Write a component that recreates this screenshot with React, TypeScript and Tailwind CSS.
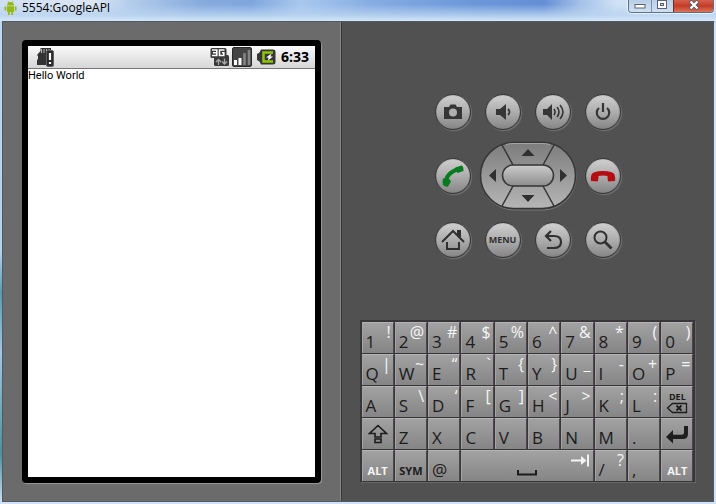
import clsx from "clsx";
import type { ReactNode } from "react";

type KeyDef = { main: string; alt?: string };

const keyRows: KeyDef[][] = [
  [
    { main: "1", alt: "!" },
    { main: "2", alt: "@" },
    { main: "3", alt: "#" },
    { main: "4", alt: "$" },
    { main: "5", alt: "%" },
    { main: "6", alt: "^" },
    { main: "7", alt: "&" },
    { main: "8", alt: "*" },
    { main: "9", alt: "(" },
    { main: "0", alt: ")" },
  ],
  [
    { main: "Q", alt: "|" },
    { main: "W", alt: "~" },
    { main: "E", alt: "“" },
    { main: "R", alt: "`" },
    { main: "T", alt: "{" },
    { main: "Y", alt: "}" },
    { main: "U", alt: "_" },
    { main: "I", alt: "-" },
    { main: "O", alt: "+" },
    { main: "P", alt: "=" },
  ],
  [
    { main: "A" },
    { main: "S", alt: "\\" },
    { main: "D", alt: "‘" },
    { main: "F", alt: "[" },
    { main: "G", alt: "]" },
    { main: "H", alt: "<" },
    { main: "J", alt: ">" },
    { main: "K", alt: ";" },
    { main: "L", alt: ":" },
  ],
  [{ main: "Z" }, { main: "X" }, { main: "C" }, { main: "V" }, { main: "B" }, { main: "N" }, { main: "M" }, { main: "." }],
];

const keyFace =
  "h-full w-full bg-linear-to-b from-[#a2a2a2] to-[#858585] border-t border-l border-t-[#b4b4b4] border-l-[#a4a4a4] border-r border-r-[#4a484a] overflow-hidden";

function Key({ main, alt }: KeyDef) {
  return (
    <button className={clsx(keyFace, "flex justify-between pl-[3px] pr-[2px]")}>
      <span className="self-end text-[17px] leading-[23px] text-[#1c1c1c]">{main}</span>
      {alt && <span className="text-[16px] leading-[18px] text-[#f6f6f6]">{alt}</span>}
    </button>
  );
}

function IconKey({ label, wide, children }: { label: string; wide?: boolean; children: ReactNode }) {
  return (
    <button
      aria-label={label}
      className={clsx(keyFace, "flex flex-col items-center justify-center", wide && "col-span-4")}
    >
      {children}
    </button>
  );
}

function WordKey({ word, light }: { word: string; light?: boolean }) {
  return (
    <button
      className={clsx(
        keyFace,
        "flex items-end justify-center pb-[2px] text-[11px] leading-4 font-bold",
        light ? "text-[#f4f4f4]" : "text-[#1c1c1c]"
      )}
    >
      {word}
    </button>
  );
}

function Keyboard() {
  return (
    <div className="mt-[62px] grid h-[163px] w-[336px] grid-cols-10 grid-rows-5 gap-px border border-[#393639] border-r-[#656565] border-b-[#656565] bg-[#393639] p-px">
      {keyRows[0].map((k) => (
        <Key key={k.main} {...k} />
      ))}
      {keyRows[1].map((k) => (
        <Key key={k.main} {...k} />
      ))}
      {keyRows[2].map((k) => (
        <Key key={k.main} {...k} />
      ))}
      <IconKey label="Delete">
        <span className="text-[9px] leading-[11px] font-bold text-[#1c1c1c]">DEL</span>
        <svg width="22" height="12" viewBox="0 0 22 12" fill="none" stroke="#1c1c1c">
          <path d="M6.5 1.5h14v9h-14L1.5 6z" strokeWidth="1.3" />
          <path d="M10.500 3.500l5 5M15.500 3.500l-5 5" strokeWidth="1.8" />
        </svg>
      </IconKey>
      <IconKey label="Shift">
        <svg width="20" height="20" viewBox="0 0 20 20" fill="none" stroke="#1c1c1c" strokeWidth="1.6">
          <path d="M10 1.5L1.5 9.500H7v3.500h6V9.500h5.500z" />
          <path d="M7 15h6v3.500H7z" />
        </svg>
      </IconKey>
      {keyRows[3].map((k) => (
        <Key key={k.main} {...k} />
      ))}
      <IconKey label="Enter">
        <svg width="24" height="20" viewBox="0 0 24 20">
          <path d="M1 13l7-7v4.800h8.500q2.500 0 2.500-2.500V2h4v8q0 5-5 5H8v4.500z" fill="#1f1f1f" />
        </svg>
      </IconKey>
      <WordKey word="ALT" light />
      <WordKey word="SYM" />
      <Key main="@" />
      <IconKey label="Space" wide>
        <svg width="130" height="30" viewBox="0 0 130 30" fill="none">
          <path d="M56 19v4.500h18V19" stroke="#1c1c1c" strokeWidth="2" />
          <path d="M109 9.500h13M126 3.500v12" stroke="#f4f4f4" strokeWidth="2" />
          <path d="M119 5l5.500 4.500-5.500 4.500z" fill="#f4f4f4" />
        </svg>
      </IconKey>
      <Key main="/" alt="?" />
      <Key main="," />
      <WordKey word="ALT" light />
    </div>
  );
}

function RoundButton({ label, children }: { label: string; children: ReactNode }) {
  return (
    <button
      aria-label={label}
      className="flex size-9 items-center justify-center rounded-full border border-[#383838] bg-linear-to-b from-[#d0d0d0] via-[#adadad] to-[#868686] text-[9px] font-bold text-[#303030] shadow-[1px_1px_1px_#747474,inset_0_0_1px_#404040]"
    >
      {children}
    </button>
  );
}

function DPad() {
  return (
    <button aria-label="Directional pad">
      <svg width="98" height="70" viewBox="0 0 98 70">
        <defs>
          <linearGradient id="pad" x1="0" y1="0" x2="0" y2="1">
            <stop offset="0" stopColor="#7c7c7c" />
            <stop offset="1" stopColor="#b6b6b6" />
          </linearGradient>
          <linearGradient id="ok" x1="0" y1="0" x2="0" y2="1">
            <stop offset="0" stopColor="#cccccc" />
            <stop offset="1" stopColor="#8c8c8c" />
          </linearGradient>
        </defs>
        <rect x="2" y="2" width="95" height="67" rx="33" fill="none" stroke="#777777" />
        <rect x="1.500" y="1.500" width="95" height="66" rx="33" fill="url(#pad)" stroke="#353535" strokeWidth="1.500" />
        <path d="M27 3.500q4-1 8-1h28q4 0 8 1" stroke="#a6a6a6" fill="none" />
        <path d="M23 4l11 20M75 4L64 24M34 45L23 65M64 45l11 20" stroke="#353535" strokeWidth="1.500" />
        <rect x="23.500" y="24" width="51" height="21" rx="10.500" fill="url(#ok)" stroke="#353535" strokeWidth="1.500" />
        <path d="M49 8l6.500 7h-13zM49 61l6.500-7h-13zM10 34.500l7-6.500v13zM88 34.500L81 28v13z" fill="#303030" />
      </svg>
    </button>
  );
}

function Controls() {
  return (
    <div className="flex w-[186px] flex-col gap-3">
      <div className="flex justify-between">
        <RoundButton label="Camera">
          <svg width="20" height="16" viewBox="0 0 20 16" fill="#363636">
            <path d="M1 3h5l1.500-2.500h5L14 3h5v12H1z" />
            <circle cx="10" cy="8.500" r="4" fill="#b0b0b0" />
          </svg>
        </RoundButton>
        <RoundButton label="Volume down">
          <svg width="18" height="18" viewBox="0 0 18 18" fill="#363636">
            <path d="M2 6h4l6-5v16l-6-5H2z" />
            <path d="M14 6q3 3 0 6" fill="none" stroke="#363636" strokeWidth="1.800" />
          </svg>
        </RoundButton>
        <RoundButton label="Volume up">
          <svg width="22" height="18" viewBox="0 0 22 18" fill="#363636">
            <path d="M1 6h4l5-5v16l-5-5H1z" />
            <path d="M12 6q2 3 0 6M15 4q4 5 0 10M18 2q6 7 0 14" fill="none" stroke="#363636" strokeWidth="1.600" />
          </svg>
        </RoundButton>
        <RoundButton label="Power">
          <svg width="18" height="18" viewBox="0 0 18 18" fill="none" stroke="#363636" strokeWidth="2.200">
            <path d="M5 5a6.200 6.200 0 1 0 8 0M9 0v9" />
          </svg>
        </RoundButton>
      </div>
      <div className="flex h-[68px] items-center justify-between">
        <RoundButton label="Call">
          <svg width="24" height="24" viewBox="0 0 24 24">
            <path d="M5 20Q4 9 19 4.500" fill="none" stroke="#087a20" strokeWidth="4" />
            <path d="M14.500 3.500l6-2q2 0 2 5.500l-6 2q-1.500-1-2-5.500zM2 14.500l4.500-.5q3 1.500 3.500 3.500l-3 5q-2 1-5-1.500-1-2 0-6.500z" fill="#087a20" />
          </svg>
        </RoundButton>
        <DPad />
        <RoundButton label="End call">
          <svg width="26" height="12" viewBox="0 0 26 12" fill="#b50d14">
            <path d="M1.500 4.500Q3 1 13 1t11.500 3.500q1 3 .5 6.500l-6.500.500q-1-1-1-5.500-4.500-1-9 0 0 4.500-1 5.500L1 11Q.5 7.500 1.500 4.500z" />
          </svg>
        </RoundButton>
      </div>
      <div className="flex justify-between">
        <RoundButton label="Home">
          <svg width="24" height="22" viewBox="0 0 24 22" fill="none" stroke="#303030" strokeWidth="2">
            <path d="M1 13L12 2l11 11M17 6V2h2v6M6 13v7h12v-7" />
          </svg>
        </RoundButton>
        <RoundButton label="Menu">MENU</RoundButton>
        <RoundButton label="Back">
          <svg width="20" height="20" viewBox="0 0 20 20" fill="none" stroke="#303030" strokeWidth="2.200">
            <path d="M8 1L3 6l5 5M3 6h8q7 0 7 6t-7 6H4" />
          </svg>
        </RoundButton>
        <RoundButton label="Search">
          <svg width="20" height="20" viewBox="0 0 20 20" fill="none" stroke="#303030">
            <circle cx="7.500" cy="7.500" r="6" strokeWidth="2" />
            <path d="M12 12l6.500 6.500" strokeWidth="2.800" />
          </svg>
        </RoundButton>
      </div>
    </div>
  );
}

function StatusBar() {
  return (
    <div className="flex h-[23px] items-center border-b border-[#777777] bg-linear-to-b from-[#fafafa] to-[#d6d6d6] pr-[6px] pl-2">
      {/* SD card warning */}
      <svg width="18" height="20" viewBox="0 0 18 20">
        <path d="M4.500 1H15v17H1v-5l1-1V9L1 8l3.500-4z" fill="#333333" />
        <path d="M5.500 2v4M8 2v4M10.500 2v4M13 2v4" stroke="#b8b8b8" />
        <rect x="10.500" y="3.500" width="7" height="16" rx="1.500" fill="#292929" stroke="#606060" />
        <path d="M14 6v7M14 15v2" stroke="#ffffff" strokeWidth="2.200" />
      </svg>
      <div className="ml-auto flex items-center gap-[2px]">
        {/* 3G data */}
        <svg width="20" height="20" viewBox="0 0 20 20">
          <rect x=".5" y="1" width="16" height="10" rx="1.500" fill="#393939" />
          <rect x="4" y="8" width="15" height="11" rx="1.500" fill="#393939" />
          <path d="M2 3h4.800v5.500H2M3 5.800h3.500M14.500 3H9.500v5.500h4.300V5.800H12" fill="none" stroke="#ffffff" strokeWidth="1.600" />
          <path d="M8.500 18v-5M6 15l2.500-2.500L11 15M14.500 11.500v5M12 14.500l2.500 2.500 2.500-2.500" fill="none" stroke="#a8a8a8" strokeWidth="1.300" />
        </svg>
        <svg width="20" height="20" viewBox="0 0 20 20">
          <rect x=".5" y=".5" width="19" height="19" rx="1.500" fill="#444444" stroke="#292929" />
          <path d="M3.500 13v5M8 11v7" stroke="#ffffff" strokeWidth="3" />
          <path d="M12.500 6v12M17 3v15" stroke="#858585" strokeWidth="2.500" />
        </svg>
        {/* Charging battery */}
        <svg className="ml-[2px]" width="20" height="16" viewBox="0 0 20 16">
          <path d="M5 .5h12q2.500 0 2.500 2v11q0 2-2.500 2H5l-1.500-3L1 11V5l2.500-1.500z" fill="#363636" />
          <path d="M17 3.500H7.500v9H17" fill="none" stroke="#8fc700" strokeWidth="2.500" />
          <path d="M15.500 4.500L10 8.500h2.500l-.5 3 5-4h-2.500z" fill="#ffffff" />
        </svg>
      </div>
      <span className="ml-[5px] text-[14px] leading-5 font-bold text-black">6:33</span>
    </div>
  );
}

function TitleBar() {
  return (
    <header className="flex h-[21px] items-start overflow-hidden bg-[linear-gradient(to_bottom,transparent_20%,#b9d3f0cc_70%,#d5e6f8),linear-gradient(to_right,#cfdff2_0%,#dce6f3_13%,#b4cdeb_18%,#86abdd_28%,#7fa6dd_35%,#a8c8ee_42%,#86ace2_52%,#6b97d9_66%,#658fd5_76%,#a3c0e8_81%,#cfe1f5_86%,#dceafa_100%)] pr-[2px] pl-1">
      <svg className="mt-[1px]" width="13" height="14" viewBox="0 0 13 14" fill="#94b816">
        <path d="M3 4.500a3.500 3.500 0 0 1 7 0zM3 5.200h7V11H3zM.5 5.500h1.700v4H.5zM10.800 5.500h1.700v4h-1.700zM4 11h1.700v3H4zM7.300 11H9v3H7.300z" />
        <path d="M4 0l1 2M9 0L8 2" stroke="#94b816" strokeWidth=".7" />
      </svg>
      <h1 className="ml-[5px] text-[12px] leading-[15px] text-black">5554:GoogleAPI</h1>
      <div className="ml-auto flex h-[13px] w-[86px] overflow-hidden rounded-b-[4px] border border-t-0 border-[#5e7186] shadow-[0_0_1px_1px_#e9f3fc]">
        <button aria-label="Minimize" className="flex flex-1 items-end justify-center bg-linear-to-b from-[#b9cfe8] to-[#d0e0f2] pb-[3px]">
          <svg width="12" height="6" viewBox="0 0 12 6">
            <rect x="1" y="1.500" width="10" height="3.500" fill="#ffffff" stroke="#5a6272" />
          </svg>
        </button>
        <button aria-label="Maximize" className="flex flex-1 items-start justify-center border-l border-[#7b90aa] bg-linear-to-b from-[#b9cfe8] to-[#d0e0f2]">
          <svg width="12" height="9" viewBox="0 0 12 9">
            <rect x="1.500" y=".5" width="9" height="8" fill="#ffffff" stroke="#5a6272" />
            <rect x="4.500" y="3.500" width="3" height="2" fill="#c3d6ec" stroke="#5a6272" />
          </svg>
        </button>
        <button aria-label="Close" className="flex w-10 items-start justify-center border-l border-[#6e2b25] bg-linear-to-b from-[#d5604d] via-[#c43a25] to-[#dc7359]">
          <svg width="12" height="10" viewBox="0 0 12 10">
            <path d="M2 1l8 8M10 1L2 9" stroke="#5d5360" strokeWidth="4" />
            <path d="M2.500 1.500l7 7M9.500 1.500l-7 7" stroke="#ffffff" strokeWidth="2.400" />
          </svg>
        </button>
      </div>
    </header>
  );
}

export default function App() {
  return (
    <div className="flex min-h-screen flex-col bg-[linear-gradient(to_bottom,#c0d7f0,#b4d1ee_50%,#5b9bae_58%,#a4c6e3_70%,#4f8f9e_90%,#cfe2f6)] font-['Open_Sans','Noto_Sans',sans-serif]">
      <TitleBar />
      <main className="mr-[2px] mb-[2px] ml-[2px] flex flex-1 border border-[#505a63] shadow-[2px_2px_0_#cfe2f7]">
        {/* Phone screen */}
        <section className="flex border-r border-[#858585] bg-[#6b6b6b] px-[19px] py-[18px]">
          <div className="flex w-[299px] flex-col rounded-[4px] border-[6px] border-black bg-white shadow-[1px_1px_1px_#999999]">
            <StatusBar />
            <p className="font-[Roboto,sans-serif] text-[11px] leading-[13px] text-black">Hello World</p>
          </div>
        </section>
        {/* Hardware buttons */}
        <section className="flex flex-1 flex-col items-center border-l border-[#383838] bg-[#515151] pt-[72px] pb-[18px]">
          <Controls />
          <Keyboard />
        </section>
      </main>
    </div>
  );
}
